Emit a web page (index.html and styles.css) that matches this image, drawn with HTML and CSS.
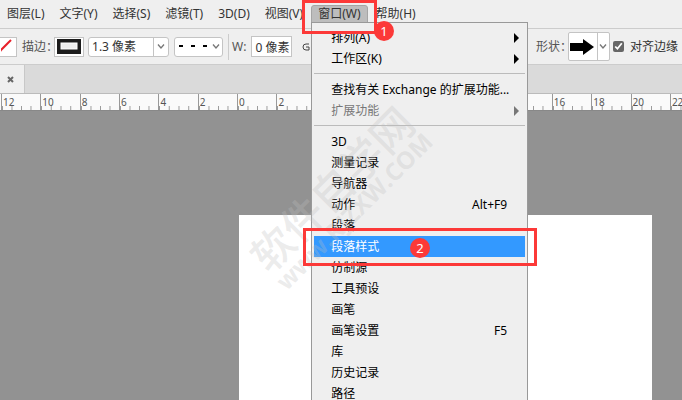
FILE: index.html
```html
<!DOCTYPE html>
<html lang="zh-CN">
<head>
  <meta charset="UTF-8" />
  <meta name="viewport" content="width=device-width, initial-scale=1.0"/>
  <title>窗口菜单</title>
  <link rel="stylesheet" href="styles.css">
</head>
<body>
  <div class="app">
    <nav class="menubar">
      <button>图层(L)</button>
      <button>文字(Y)</button>
      <button>选择(S)</button>
      <button>滤镜(T)</button>
      <button>3D(D)</button>
      <button>视图(V)</button>
      <div class="menu-wrap">
        <button class="open">窗口(W)</button>
        <div class="dropdown">
          <button class="item">排列(A)<svg class="arrow" viewBox="0 0 5 10"><path d="M0 0L5 5L0 10Z"/></svg></button>
          <button class="item">工作区(K)<svg class="arrow" viewBox="0 0 5 10"><path d="M0 0L5 5L0 10Z"/></svg></button>
          <hr>
          <button class="item">查找有关 Exchange 的扩展功能...</button>
          <button class="item" disabled>扩展功能<svg class="arrow" viewBox="0 0 5 10"><path d="M0 0L5 5L0 10Z"/></svg></button>
          <hr>
          <button class="item">3D</button>
          <button class="item">测量记录</button>
          <button class="item">导航器</button>
          <button class="item">动作<span class="key">Alt+F9</span></button>
          <button class="item">段落</button>
          <button class="item selected">段落样式</button>
          <button class="item">仿制源</button>
          <button class="item">工具预设</button>
          <button class="item">画笔</button>
          <button class="item">画笔设置<span class="key">F5</span></button>
          <button class="item">库</button>
          <button class="item">历史记录</button>
          <button class="item">路径</button>
        </div>
      </div>
      <button>帮助(H)</button>
    </nav>

    <div class="options">
      <button class="swatch fill" aria-label="填充">
        <svg viewBox="0 0 13 16"><path d="M-6 17L10 1" stroke="#e8202a" stroke-width="2"/></svg>
      </button>
      <span class="label colon">描边：</span>
      <button class="swatch" aria-label="描边颜色">
        <svg viewBox="0 0 26 16"><rect x="1" width="24" height="15" fill="#1c1c1c"/><rect x="5" y="4" width="16" height="6" fill="#efefef" stroke="#fff"/></svg>
      </button>
      <div class="combo">
        <select aria-label="描边宽度"><option>1.3 像素</option></select>
        <svg class="chevron" viewBox="0 0 8 5"><path d="M1 0.5L4 4L7 0.5"/></svg>
      </div>
      <button class="line-style" aria-label="描边类型" aria-haspopup="listbox">
        <svg class="dots" viewBox="0 0 28 3"><path d="M0 0h4v2h-4zM12 0h4v2h-4zM24 0h4v2h-4z"/></svg>
        <svg class="chevron" viewBox="0 0 8 5"><path d="M1 0.5L4 4L7 0.5"/></svg>
      </button>
      <span class="divider"></span>
      <label class="label" for="w">W:</label>
      <input class="size" id="w" type="text" value="0 像素">
      <svg class="link" viewBox="0 0 12 8"><path d="M7 1H4a3 3 0 0 0 0 6H7V4H4M9 4h3"/></svg>

      <div class="right">
        <span class="label colon">形状：</span>
        <button class="shape" aria-label="形状" aria-haspopup="listbox">
          <svg class="shape-arrow" viewBox="0 0 24 16"><path d="M0 4H13V0L24 8L13 16V12H0Z"/></svg>
          <span class="shape-open"><svg class="chevron" viewBox="0 0 8 5"><path d="M1 0.5L4 4L7 0.5"/></svg></span>
        </button>
        <label class="check"><input type="checkbox" checked>对齐边缘</label>
      </div>
    </div>

    <div class="tabs">
      <div class="tab">
        <button aria-label="关闭"><svg viewBox="0 0 7 7"><path d="M1 1L6 6M6 1L1 6"/></svg></button>
      </div>
    </div>

    <div class="ruler">
      <div class="scale">
        <span>12</span><span>10</span><span>8</span><span>6</span><span>4</span><span>2</span>
        <span>0</span><span>2</span><span></span><span></span><span></span><span></span>
        <span></span><span></span><span>16</span><span>18</span><span>20</span><span>22</span>
      </div>
    </div>

    <main class="workspace">
      <div class="page"></div>
    </main>

    <div class="watermark">
      <div class="name">软件自学网</div>
      <div class="site">www.RJZXW.COM</div>
    </div>

    <div class="mark mark-menu"></div>
    <div class="step step-1">1</div>
    <div class="mark mark-item"></div>
    <div class="step step-2">2</div>
  </div>
</body>
</html>
```

FILE: styles.css
```css
* {
  box-sizing: border-box;
}
body {
  margin: 0;
  font-family: "Noto Sans", "Noto Sans CJK SC", sans-serif;
  font-size: 12px;
  line-height: 16px;
  color: #333;
}
button, input, select {
  font: inherit;
  color: inherit;
  margin: 0;
  padding: 0;
  border: none;
  border-radius: 0;
  background: none;
}
svg {
  display: block;
  flex: none;
}
.app {
  position: relative;
  display: flex;
  flex-direction: column;
  height: 100vh;
  overflow: hidden;
  background: #efefef;
}

/* menu bar */
.menubar {
  display: flex;
  align-items: center;
  gap: 1px;
  height: 28px;
  white-space: nowrap;
}
.menubar > button, .open {
  height: 18px;
  padding: 0 7px;
}
.menu-wrap {
  position: relative;
}
.menu-wrap .open {
  display: block;
  background: #bdbdbd;
  border: 1px solid #a5a5a5;
  border-radius: 3px 3px 0 0;
  padding: 0 6px;
  line-height: 14px;
}
.dropdown {
  position: absolute;
  z-index: 2;
  top: 17px;
  left: 0;
  width: 217px;
  padding: 4px 2px;
  background: #efefef;
  border: 1px solid #999;
  color: #000;
}
.item {
  display: flex;
  align-items: center;
  width: 100%;
  height: 21px;
  padding: 0 6px 0 17px;
  text-align: left;
}
.item:disabled {
  color: #777;
}
.item.selected {
  background: #3399ff;
  color: #fff;
}
.arrow {
  width: 5px;
  height: 10px;
  margin-left: auto;
  fill: currentColor;
}
.key {
  margin-left: auto;
  padding-right: 12px;
}
.dropdown hr {
  height: 1px;
  margin: 4px 0 5px;
  border: none;
  background: #bbb;
}

/* options bar */
.options {
  display: flex;
  align-items: center;
  height: 37px;
  border-top: 1px solid #ccc;
  border-bottom: 1px solid #ccc;
  white-space: nowrap;
}
.label {
  color: #555;
}
.label.colon {
  margin-right: -4px;
}
.swatch {
  width: 30px;
  height: 20px;
  padding: 1px;
  background: #fff;
  border: 1px solid #c4c4c4;
}
.swatch svg {
  width: 26px;
  height: 16px;
}
.swatch.fill {
  width: 17px;
  margin-right: 5px;
  border-left: none;
}
.fill svg {
  width: 13px;
}
.combo {
  display: flex;
  align-items: center;
  position: relative;
  width: 81px;
  height: 20px;
  margin-left: 4px;
  background: #fff;
  border: 1px solid #c4c4c4;
  border-radius: 3px;
}
.combo select {
  appearance: none;
  width: 100%;
  height: 18px;
  padding-left: 3px;
}
.combo .chevron {
  position: absolute;
  right: 3px;
  pointer-events: none;
}
.combo::after {
  content: "";
  position: absolute;
  right: 14px;
  height: 18px;
  border-left: 1px solid #c4c4c4;
}
.chevron {
  width: 8px;
  height: 5px;
  fill: none;
  stroke: #777;
  stroke-width: 1.3;
}
.line-style {
  display: flex;
  align-items: center;
  justify-content: space-between;
  width: 49px;
  height: 20px;
  margin-left: 5px;
  padding: 0 2px 0 4px;
  background: #fff;
  border: 1px solid #c4c4c4;
  border-radius: 3px;
}
.dots {
  width: 28px;
  height: 3px;
}
.divider {
  width: 1px;
  height: 26px;
  margin: 0 3px 0 5px;
  background: #ccc;
}
.size {
  width: 41px;
  height: 21px;
  margin-left: 5px;
  padding-left: 3px;
  background: #fff;
  border: 1px solid #c4c4c4;
}
.link {
  width: 12px;
  height: 8px;
  margin-left: 10px;
  fill: none;
  stroke: #444;
}
.right {
  display: flex;
  align-items: center;
  margin-left: auto;
  padding-right: 4px;
}
.shape {
  display: flex;
  align-items: center;
  width: 42px;
  height: 29px;
  padding-left: 1px;
  background: #fff;
  border: 1px solid #c4c4c4;
  border-radius: 2px;
}
.shape-arrow {
  width: 24px;
  height: 16px;
}
.shape-open {
  display: flex;
  align-items: center;
  justify-content: center;
  flex: 1;
  height: 27px;
  margin-left: 3px;
  border-left: 1px solid #c4c4c4;
}
.check {
  display: flex;
  align-items: center;
  gap: 6px;
  margin-left: 3px;
}
.check input {
  width: 11px;
  height: 11px;
  accent-color: #666;
}

/* document tab */
.tabs {
  display: flex;
  height: 29px;
  background: #dadada;
  border-bottom: 1px solid #bbb;
}
.tab {
  display: flex;
  align-items: center;
  width: 25px;
  padding-left: 7px;
  background: #efefef;
  border-right: 1px solid #c8c8c8;
}
.tab svg {
  width: 7px;
  height: 7px;
  stroke: #666;
  stroke-width: 2;
}

/* ruler */
.ruler {
  height: 17px;
  padding-left: 1px;
  overflow: hidden;
  background: #fafafa;
  border-bottom: 1px solid #888;
}
.scale {
  display: grid;
  grid-template-columns: repeat(18, 1fr);
  width: 104%;
  height: 16px;
}
.scale span {
  padding-left: 1px;
  border-left: 1px solid #999;
  background: linear-gradient(to right, #999 1px, transparent 1px) 0 100% / 25% 4px repeat-x;
  font-size: 10px;
  color: #555;
}

/* canvas */
.workspace {
  flex: 1;
  display: flex;
  padding: 104px 30px 0 35%;
  background: #929292;
}
.page {
  flex: 1;
  background: #fff;
}

/* watermark */
.watermark {
  position: absolute;
  z-index: 3;
  left: 230px;
  top: 166px;
  width: 220px;
  text-align: center;
  white-space: nowrap;
  font-weight: bold;
  color: rgba(190, 190, 190, 0.3);
  transform: rotate(-45deg);
  pointer-events: none;
}
.watermark .name {
  font-weight: 500;
  font-size: 42px;
  line-height: 40px;
}
.watermark .site {
  font-family: "Open Sans", sans-serif;
  font-size: 24px;
  line-height: 22px;
}

/* step marks */
.mark {
  position: absolute;
  z-index: 4;
  border: 3px solid #fc3938;
}
.mark-menu {
  left: 302px;
  top: 0;
  width: 75px;
  height: 34px;
}
.mark-item {
  left: 303px;
  top: 228px;
  width: 234px;
  height: 38px;
}
.step {
  position: absolute;
  z-index: 5;
  width: 20px;
  height: 20px;
  border-radius: 50%;
  background: #fc3938;
  color: #fff;
  font-size: 13px;
  line-height: 20px;
  text-align: center;
}
.step-1 {
  left: 374px;
  top: 21px;
}
.step-2 {
  left: 410px;
  top: 238px;
}
```
